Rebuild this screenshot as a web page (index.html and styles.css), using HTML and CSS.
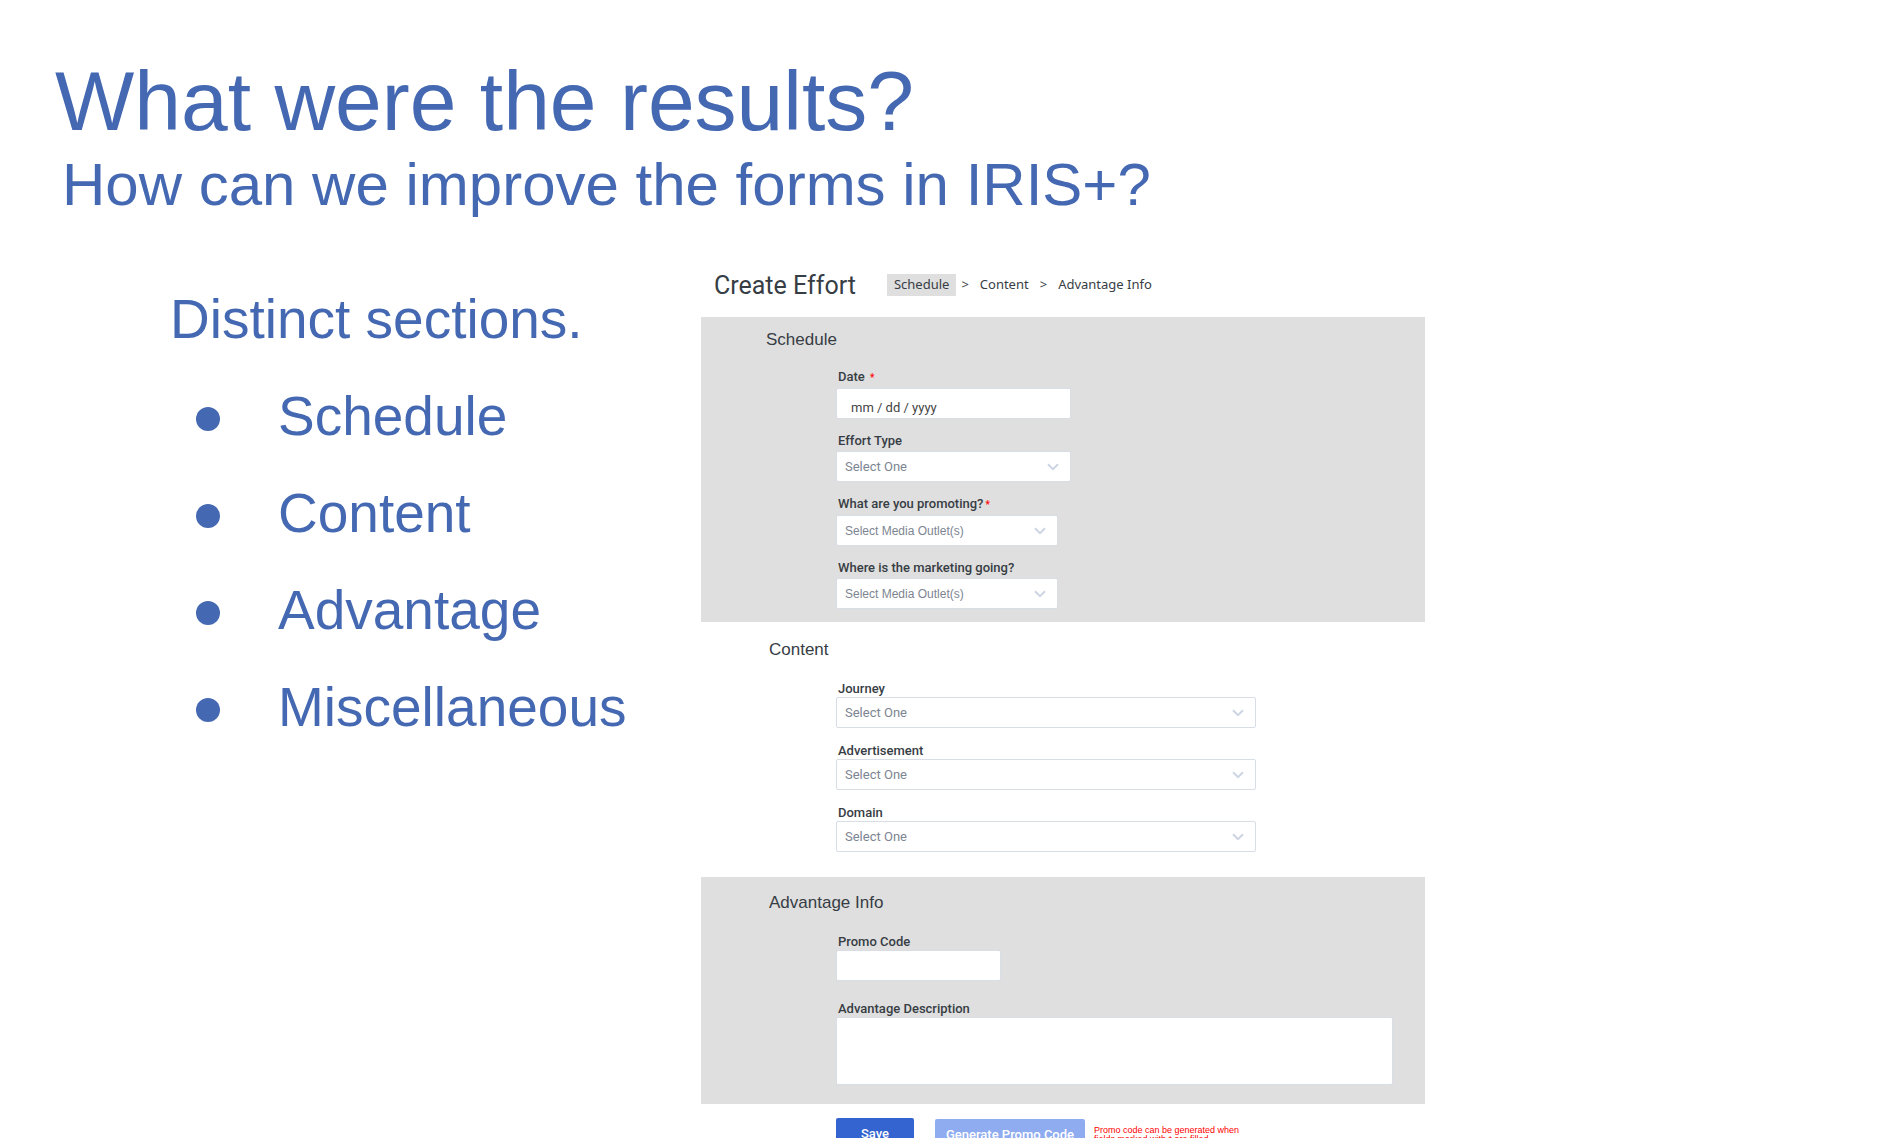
FILE: index.html
```html
<!DOCTYPE html>
<html lang="en">
<head>
<meta charset="utf-8">
<title>What were the results?</title>
<link rel="stylesheet" href="styles.css">
</head>
<body>
<svg class="defs" aria-hidden="true"><symbol id="chevron" viewBox="0 0 12 8"><path d="M1 1.2 6 6.2 11 1.2" fill="none" stroke="currentColor" stroke-width="2"/></symbol></svg>
<main class="slide">
  <header class="slide-head">
    <h1 class="title">What were the results?</h1>
    <p class="subtitle">How can we improve the forms in IRIS+?</p>
  </header>
  <div class="columns">
    <section class="points">
      <h2 class="lead">Distinct sections.</h2>
      <ul class="list">
        <li class="point">Schedule</li>
        <li class="point">Content</li>
        <li class="point">Advantage</li>
        <li class="point">Miscellaneous</li>
      </ul>
    </section>
    <form class="effort">
      <div class="effort-head">
        <h2 class="effort-title">Create Effort</h2>
        <nav class="crumbs">
          <a class="crumb crumb-active" href="#schedule">Schedule</a><span class="sep">&gt;</span><a class="crumb" href="#content">Content</a><span class="sep">&gt;</span><a class="crumb" href="#advantage">Advantage Info</a>
        </nav>
      </div>
      <section class="panel schedule" id="schedule">
        <h3 class="panel-title">Schedule</h3>
        <div class="fields">
          <div class="field"><label class="label" for="date">Date <span class="req">*</span></label><input class="control date medium" id="date" type="text" value="mm / dd / yyyy"></div>
          <div class="field"><label class="label" for="type">Effort Type</label><div class="picker medium"><select class="control" id="type"><option>Select One</option></select><svg class="chevron"><use href="#chevron"/></svg></div></div>
          <div class="field"><label class="label" for="what">What are you promoting?<span class="req">*</span></label><div class="picker small"><select class="control outlet" id="what"><option>Select Media Outlet(s)</option></select><svg class="chevron"><use href="#chevron"/></svg></div></div>
          <div class="field"><label class="label" for="where">Where is the marketing going?</label><div class="picker small"><select class="control outlet" id="where"><option>Select Media Outlet(s)</option></select><svg class="chevron"><use href="#chevron"/></svg></div></div>
        </div>
      </section>
      <section class="panel content" id="content">
        <h3 class="panel-title">Content</h3>
        <div class="fields">
          <div class="field"><label class="label" for="journey">Journey</label><div class="picker large"><select class="control" id="journey"><option>Select One</option></select><svg class="chevron"><use href="#chevron"/></svg></div></div>
          <div class="field"><label class="label" for="ad">Advertisement</label><div class="picker large"><select class="control" id="ad"><option>Select One</option></select><svg class="chevron"><use href="#chevron"/></svg></div></div>
          <div class="field"><label class="label" for="domain">Domain</label><div class="picker large"><select class="control" id="domain"><option>Select One</option></select><svg class="chevron"><use href="#chevron"/></svg></div></div>
        </div>
      </section>
      <section class="panel advantage" id="advantage">
        <h3 class="panel-title">Advantage Info</h3>
        <div class="fields">
          <div class="field"><label class="label" for="promo">Promo Code</label><input class="control code" id="promo" type="text"></div>
          <div class="field"><label class="label" for="desc">Advantage Description</label><textarea class="control desc" id="desc"></textarea></div>
        </div>
      </section>
      <div class="actions">
        <button class="btn save" type="button">Save</button>
        <button class="btn generate" type="button">Generate Promo Code</button>
        <p class="note">Promo code can be generated when fields marked with * are filled.</p>
      </div>
    </form>
  </div>
</main>
</body>
</html>
```
FILE: styles.css
```css
* { box-sizing: border-box; }
body { margin: 0; background: #fff; font-family: Roboto, sans-serif; color: #373d44; }
h1, h2, h3, p, ul { margin: 0; padding: 0; font-weight: 400; }
.defs { display: none; }

.slide { height: 100vh; overflow: hidden; padding-top: 53px; }
.slide-head, .points { font-family: "Liberation Sans", Arial, sans-serif; color: #4468b1; }
.title { padding-left: 55px; font-size: 84px; line-height: 96px; }
.subtitle { padding-left: 62px; margin-top: 2px; font-size: 60px; line-height: 68px; }

.columns { display: grid; grid-template-columns: 701px minmax(0, 724px); }
.points { padding: 52px 0 0 170px; font-size: 55px; line-height: 97px; }
.lead { font-size: 55px; }
.list { list-style: none; padding-left: 26px; }
.point { display: flex; align-items: center; gap: 58px; }
.point::before { content: ""; width: 24px; height: 24px; margin-top: 4px; border-radius: 50%; background: #4468b1; }

.effort { padding-top: 54px; }
.effort-head { display: flex; align-items: center; gap: 31px; padding-left: 13px; margin-bottom: 20px; }
.effort-title { padding-top: 2px; font-size: 25px; line-height: 22px; }
.crumbs { display: flex; font-family: "Noto Sans", sans-serif; font-size: 13px; line-height: 20px; }
.crumb { padding-bottom: 2px; color: inherit; text-decoration: none; }
.crumb-active { padding-left: 7px; padding-right: 7px; background: #dfdfdf; }
.sep { padding: 0 11px; }
.crumb-active + .sep { padding-left: 5px; }

.panel { background: #dfdfdf; }
.panel-title { font: 17px/20px "Liberation Sans", Arial, sans-serif; }
.fields { display: flex; flex-direction: column; gap: 15px; padding-left: 135px; margin-top: 21px; }
.field { display: flex; flex-direction: column; align-items: flex-start; }
.label { padding-left: 2px; font-size: 13px; font-weight: 500; line-height: 16px; }
.req { margin-left: 2px; font-size: 10px; color: #f00; }
.schedule { padding: 13px 0 13px; }
.schedule .panel-title { padding-left: 65px; }
.schedule .field { gap: 2px; }
.schedule .fields { gap: 14px; margin-top: 19px; }
.content { padding: 18px 0 25px; background: #fff; }
.content .panel-title, .advantage .panel-title { padding-left: 68px; }
.advantage { padding: 16px 32px 19px 0; }
.advantage .fields { gap: 20px; }

.control { appearance: none; display: block; width: 100%; height: 31px; margin: 0; padding: 0 8px; border: 1px solid #d8dde6; border-radius: 2px; background: #fff; color: #7d8592; font: 13px/16px Roboto, sans-serif; outline: 0; }
.outlet { font-family: "Liberation Sans", Arial, sans-serif; font-size: 12px; }
.date { padding: 8px 14px 0; color: #444; }
.picker { display: grid; align-items: center; }
.picker > * { grid-area: 1 / 1; }
.chevron { justify-self: end; width: 12px; height: 8px; margin-right: 12px; color: #cdd5e3; pointer-events: none; }
.medium { width: 235px; }
.small { width: 222px; }
.large { width: 420px; }
.code { width: 165px; }
.desc { height: 68px; resize: none; }

.actions { display: flex; align-items: flex-start; padding: 14px 0 20px 135px; }
.btn { height: 32px; border: 0; border-radius: 2px; color: #fff; font: 500 13px/16px Roboto, sans-serif; }
.save { width: 78px; background: #3464cf; }
.generate { width: 150px; margin: 1px 9px 0 21px; background: #8facf0; }
.note { width: 150px; margin-top: 8px; font: 9px/9px "Liberation Sans", Arial, sans-serif; color: #f00; }
```
